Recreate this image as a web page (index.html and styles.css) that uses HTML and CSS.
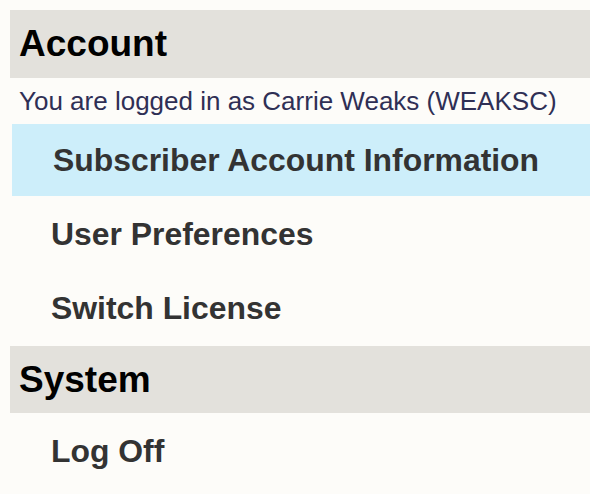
FILE: index.html
```html
<!DOCTYPE html>
<html lang="en">
<head>
<meta charset="utf-8">
<title>Account</title>
<link rel="stylesheet" href="styles.css">
</head>
<body>
<div class="menu">
  <h2 class="section-title">Account</h2>
  <p class="login-info">You are logged in as Carrie Weaks (WEAKSC)</p>
  <ul class="items">
    <li class="item item-active">Subscriber Account Information</li>
    <li class="item">User Preferences</li>
    <li class="item">Switch License</li>
  </ul>
  <h2 class="section-title section-next">System</h2>
  <ul class="items">
    <li class="item">Log Off</li>
  </ul>
</div>
</body>
</html>
```

FILE: styles.css
```css
html, body {
  margin: 0;
  padding: 0;
  background: #fdfcf9;
}

body {
  padding: 10px 0 0 10px;
  font-family: "Liberation Sans", Arial, Helvetica, sans-serif;
}

.menu {
  display: flex;
  flex-direction: column;
}

.section-title {
  margin: 0;
  height: 68px;
  line-height: 68px;
  padding-left: 9px;
  background: #e3e1dc;
  color: #000;
  font-size: 37px;
  font-weight: bold;
}

.section-next {
  margin-top: 2px;
  height: 67px;
  line-height: 67px;
}

.login-info {
  margin: 0;
  padding: 2px 0 0 9px;
  line-height: 42px;
  font-size: 26px;
  color: #2f2f55;
}

.items {
  list-style: none;
  margin: 0;
  padding: 0;
}

.item {
  margin-top: 2px;
  height: 72px;
  line-height: 72px;
  padding-left: 41px;
  font-size: 31.9px;
  font-weight: bold;
  color: #333333;
}

.item-active {
  margin-left: 2px;
  background: #cdeefa;
}
```
